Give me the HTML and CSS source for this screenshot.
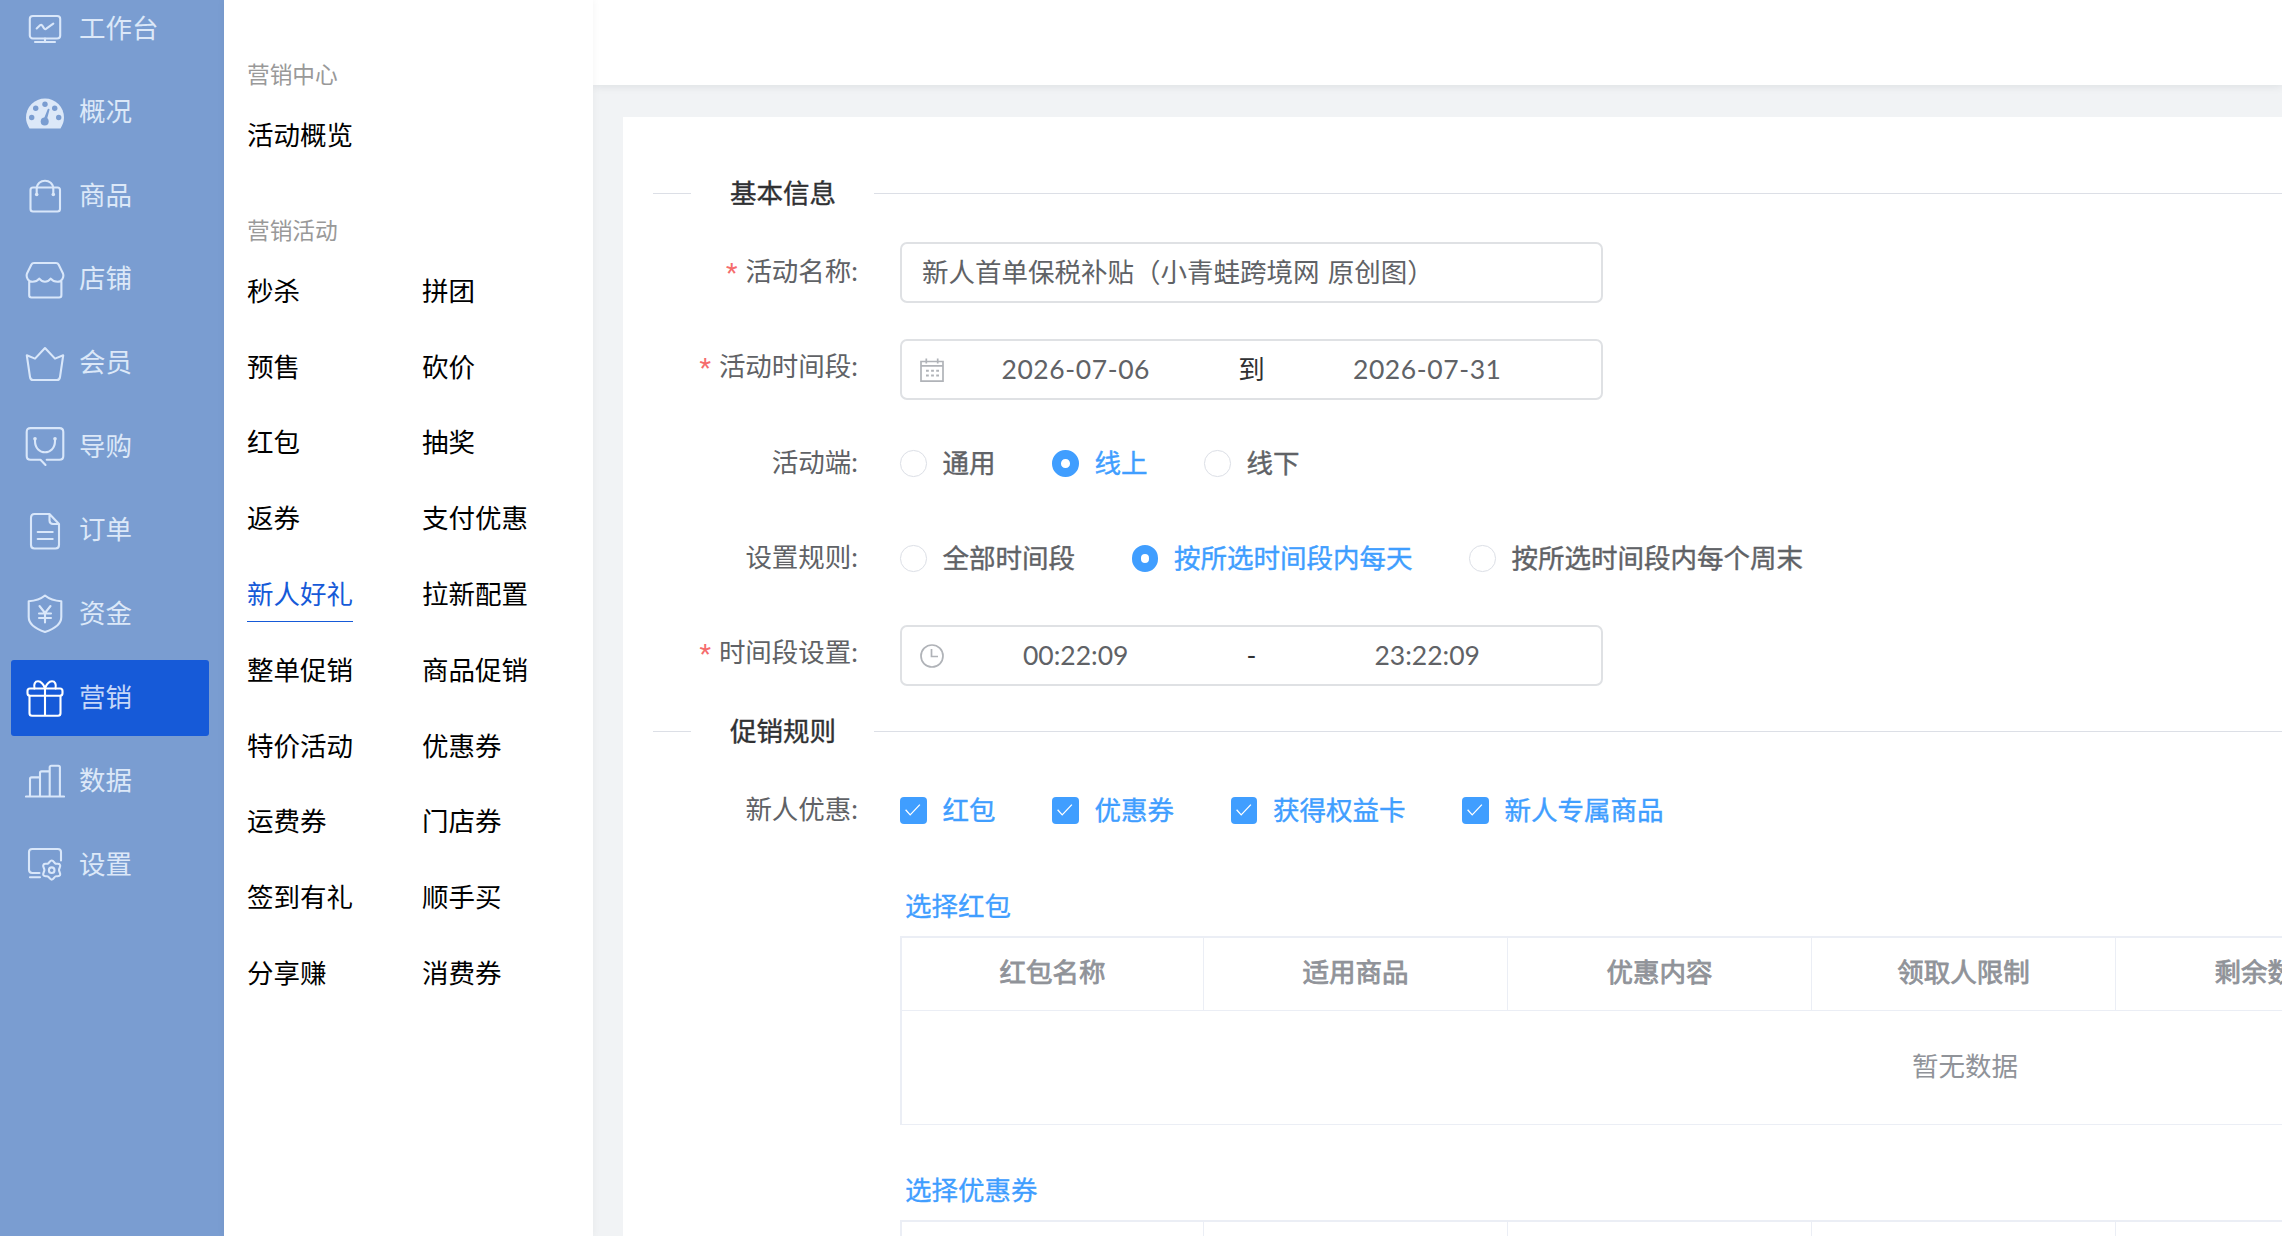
FILE: index.html
```html
<!DOCTYPE html>
<html lang="zh-CN">
<head>
  <meta charset="UTF-8">
  <meta name="viewport" content="width=device-width, initial-scale=1.0">
  <title>新人好礼</title>
  <link rel="stylesheet" href="styles.css">
</head>
<body>
  <div class="app">
    <nav class="sidebar">
      <a class="nav-item">
        <svg class="nav-icon" viewBox="0 0 40 40"><rect x="4.8" y="7" width="30.4" height="22.5" rx="3"/><path d="M20 29.5V33M10 33h20M11.7 19.5l3.6-3.4c.8-.6 1.2-.4 1.8.3l2 3c.7 1 1.4 1 2.2.3l7-5"/></svg>
        <span>工作台</span>
      </a>
      <a class="nav-item">
        <svg class="nav-icon" viewBox="0 0 40 40">
          <path class="fill" d="M4.5 35.5C2.4 32 1 28.5 1 24.500a19 19 0 0 1 38 0c0 4-1.400 7.500-3.500 11z"/>
          <g class="hole"><circle cx="6.700" cy="24.500" r="2.700"/><circle cx="10.700" cy="15.200" r="2.700"/><circle cx="20" cy="11.200" r="2.700"/><circle cx="29.700" cy="15.200" r="2.700"/><circle cx="33.700" cy="24.500" r="2.700"/><circle cx="19.700" cy="28.500" r="4"/><path d="M18.400 27l4.300-10.700c.4-1 2-.5 1.800.5L21.500 28z"/></g>
        </svg>
        <span>概况</span>
      </a>
      <a class="nav-item">
        <svg class="nav-icon" viewBox="0 0 40 40"><rect x="5.500" y="11.500" width="29.500" height="24" rx="2.500"/><path d="M11.700 18.500V13c0-11 16.600-11 16.600 0v5.500"/><circle class="fill" cx="11.700" cy="18.500" r="1.800"/><circle class="fill" cx="28.300" cy="18.500" r="1.800"/></svg>
        <span>商品</span>
      </a>
      <a class="nav-item">
        <svg class="nav-icon" viewBox="0 0 40 40"><path d="M9 3h22c1.500 0 2.200.7 2.700 1.700L38 13.500c1.200 3.500-1 8.300-5.500 8.300-3 0-5.300-1.300-6.800-3.200-1.500 1.900-3 3.200-5.700 3.200s-4.200-1.300-5.700-3.200c-1.500 1.900-3.800 3.200-6.800 3.200C3 21.800.8 17 2 13.500L6.300 4.700C6.800 3.700 7.500 3 9 3zM4.200 21.500v13.800c0 1.400.8 2.200 2.200 2.200h27.800c1.400 0 2.200-.8 2.200-2.200V21.500"/></svg>
        <span>店铺</span>
      </a>
      <a class="nav-item">
        <svg class="nav-icon" viewBox="0 0 40 40"><path d="M1.800 11.300l8.200 3.300L20 4l10 10.600 8.200-3.300L35 33c-.3 2-1.200 3-3 3H8c-1.800 0-2.700-1-3-3z"/></svg>
        <span>会员</span>
      </a>
      <a class="nav-item">
        <svg class="nav-icon" viewBox="0 0 40 40"><path d="M20.500 38l-5-5.300H5.500c-2.500 0-3.800-1.300-3.800-3.800v-24c0-2.500 1.300-3.800 3.800-3.800h29c2.500 0 3.800 1.300 3.800 3.800v24c0 2.500-1.300 3.800-3.800 3.800H21.700M10 12v2c0 15 20 15 20 0v-2"/><circle class="fill" cx="10" cy="11.800" r="1.800"/><circle class="fill" cx="30" cy="11.800" r="1.800"/></svg>
        <span>导购</span>
      </a>
      <a class="nav-item">
        <svg class="nav-icon" viewBox="0 0 40 40"><path d="M24.500 3H9.500C7.200 3 6 4.200 6 6.500V34c0 2.300 1.200 3.500 3.500 3.500h21c2.300 0 3.500-1.200 3.500-3.500V13zM24.500 3v6.500c0 2.300 1.200 3.500 3.500 3.500h6M12.700 21h15M12.700 28h15"/></svg>
        <span>订单</span>
      </a>
      <a class="nav-item">
        <svg class="nav-icon" viewBox="0 0 40 40"><path d="M20 1.500c4.500 3.700 9.500 5.300 16.300 5.800V23c0 8-7.300 12-16.300 15-9-3-16.300-7-16.300-15V7.300C10.500 6.800 15.500 5.200 20 1.500zM14.500 12l5.500 7 5.500-7M20 19v9.500M14 19.500h12M14 24h12"/></svg>
        <span>资金</span>
      </a>
      <a class="nav-item active">
        <svg class="nav-icon" viewBox="0 0 40 40"><rect x="2.500" y="10.500" width="35" height="7.300" rx="2.500"/><path d="M4.500 17.800v17.400c0 1.500 1 2.500 2.500 2.500h26c1.500 0 2.500-1 2.500-2.500V17.800M20 10.500v27.200M9.500 10.500C8.500 6 10 3.300 13 3.300s6 3.200 7 7.200c1-4 4-7.200 7-7.200s4.500 2.700 3.500 7.200"/></svg>
        <span>营销</span>
      </a>
      <a class="nav-item">
        <svg class="nav-icon" viewBox="0 0 40 40"><path d="M1 34.500h38M5 34.500V17c0-1 .6-1.600 1.600-1.600H15M15 34.500V11c0-1 .6-1.600 1.600-1.600h8.100M24.700 34.500V5.300c0-1 .6-1.600 1.600-1.600h7c1 0 1.600.6 1.600 1.600v29.200"/></svg>
        <span>数据</span>
      </a>
      <a class="nav-item">
        <svg class="nav-icon" viewBox="0 0 40 40"><path d="M14.500 28H7.200C5 28 4 27 4 24.800V7c0-2 1-3 3.200-3h25.600C35 4 36 5 36 7v8.500M5 32.200h10"/><path d="M26.700 15.500c2 0 2.300 2.600 3.900 3.200 1.500.5 3.400-.7 4.400 1 1 1.600-1 3.400-1 5.300s2 3.600 1 5.300c-1 1.700-2.900.5-4.400 1.100-1.600.6-1.900 3.200-3.900 3.200s-2.300-2.600-3.900-3.200c-1.500-.6-3.400.6-4.400-1.100s1-3.400 1-5.300-2-3.700-1-5.300c1-1.700 2.900-.5 4.400-1 1.600-.6 1.900-3.200 3.900-3.200z"/><circle cx="26.700" cy="25.200" r="2.800"/></svg>
        <span>设置</span>
      </a>
    </nav>

    <aside class="submenu">
      <div class="submenu-title">营销中心</div>
      <div class="submenu-list">
        <a>活动概览</a>
      </div>
      <div class="submenu-title">营销活动</div>
      <div class="submenu-list">
        <a>秒杀</a><a>拼团</a>
        <a>预售</a><a>砍价</a>
        <a>红包</a><a>抽奖</a>
        <a>返券</a><a>支付优惠</a>
        <a class="current">新人好礼</a><a>拉新配置</a>
        <a>整单促销</a><a>商品促销</a>
        <a>特价活动</a><a>优惠券</a>
        <a>运费券</a><a>门店券</a>
        <a>签到有礼</a><a>顺手买</a>
        <a>分享赚</a><a>消费券</a>
      </div>
    </aside>

    <main class="main">
      <header class="topbar"></header>
      <section class="card">
        <div class="divider"><span>基本信息</span></div>

        <div class="form-item">
          <label class="required">活动名称:</label>
          <div class="input">新人首单保税补贴（小青蛙跨境网 原创图）</div>
        </div>
        <div class="form-item item-range">
          <label class="required">活动时间段:</label>
          <div class="input range">
            <svg class="range-icon" viewBox="0 0 24 24"><path d="M1 3.500h22v19.700H1zM1 7.800h22M6.300.5v5M17.700.5v5"/><path class="dots" d="M6 12.800h13M6 17.500h13"/></svg>
            <span class="range-value">2026-07-06</span>
            <span class="range-sep">到</span>
            <span class="range-value">2026-07-31</span>
          </div>
        </div>
        <div class="form-item item-side">
          <label>活动端:</label>
          <div class="options">
            <span class="option"><i class="radio"></i>通用</span>
            <span class="option checked"><i class="radio"></i>线上</span>
            <span class="option"><i class="radio"></i>线下</span>
          </div>
        </div>
        <div class="form-item">
          <label>设置规则:</label>
          <div class="options">
            <span class="option"><i class="radio"></i>全部时间段</span>
            <span class="option checked"><i class="radio"></i>按所选时间段内每天</span>
            <span class="option"><i class="radio"></i>按所选时间段内每个周末</span>
          </div>
        </div>
        <div class="form-item item-range">
          <label class="required">时间段设置:</label>
          <div class="input range">
            <svg class="range-icon" viewBox="0 0 24 24"><circle cx="12" cy="12" r="11"/><path d="M11.500 5v7.500h6.500"/></svg>
            <span class="range-value time">00:22:09</span>
            <span class="range-sep">-</span>
            <span class="range-value time">23:22:09</span>
          </div>
        </div>

        <div class="divider divider-rules"><span>促销规则</span></div>

        <div class="form-item">
          <label>新人优惠:</label>
          <div class="options">
            <span class="option checked"><svg class="checkbox" viewBox="0 0 26 26"><path d="M5.500 12.500l4.500 5 9.500-10"/></svg>红包</span>
            <span class="option checked"><svg class="checkbox" viewBox="0 0 26 26"><path d="M5.500 12.500l4.500 5 9.500-10"/></svg>优惠券</span>
            <span class="option checked"><svg class="checkbox" viewBox="0 0 26 26"><path d="M5.500 12.500l4.500 5 9.500-10"/></svg>获得权益卡</span>
            <span class="option checked"><svg class="checkbox" viewBox="0 0 26 26"><path d="M5.500 12.500l4.500 5 9.500-10"/></svg>新人专属商品</span>
          </div>
        </div>

        <div class="picker">
          <a class="picker-link">选择红包</a>
          <div class="table">
            <div class="table-head">
              <div>红包名称</div><div>适用商品</div><div>优惠内容</div><div>领取人限制</div><div>剩余数量</div><div></div><div></div>
            </div>
            <div class="table-empty">暂无数据</div>
          </div>
        </div>
        <div class="picker">
          <a class="picker-link">选择优惠券</a>
          <div class="table">
            <div class="table-head">
              <div></div><div></div><div></div><div></div><div></div><div></div><div></div>
            </div>
          </div>
        </div>
      </section>
    </main>
  </div>
</body>
</html>
```

FILE: styles.css
```css
* {
  box-sizing: border-box;
}
body {
  margin: 0;
  font-family: Lato, "Noto Sans CJK SC", sans-serif;
  font-size: 26.5px;
  color: #606266;
  background-color: #f1f3f5;
  overflow: hidden;
}
.app {
  display: flex;
  height: 100vh;
  overflow: hidden;
}

/* left navigation */
.sidebar {
  flex: none;
  width: 224px;
  padding: 0 15px 0 11px;
  margin-top: -9px;
  background-color: #7a9dd1;
}
.nav-item {
  display: flex;
  align-items: center;
  height: 76px;
  margin-bottom: 7.65px;
  padding-left: 14px;
  border-radius: 3px;
  color: #dce8f8;
}
.nav-item span {
  margin: -6px 0 0 14px;
}
.nav-icon {
  width: 40px;
  height: 40px;
  fill: none;
  stroke: #d9e7fa;
  stroke-width: 2.1;
  stroke-linejoin: round;
  stroke-linecap: round;
}
.nav-icon .fill {
  fill: #dce8f8;
  stroke: none;
}
.nav-icon .hole {
  fill: #7a9dd1;
  stroke: none;
}
.nav-item.active {
  background-color: #165ad8;
  color: #c5d7f8;
}
.nav-item.active .nav-icon {
  stroke: #fff;
}

/* second level menu */
.submenu {
  flex: none;
  width: 369px;
  padding: 56px 0 0 23px;
  background-color: #fff;
  box-shadow: 0 0 8px rgba(0, 0, 0, 0.05);
  z-index: 1;
}
.submenu-title {
  height: 38px;
  line-height: 38px;
  font-size: 22.7px;
  color: #999;
}
.submenu-list {
  display: grid;
  grid-template-columns: 175px 1fr;
  grid-auto-rows: 75.8px;
  justify-items: start;
  margin: 15px 0 27px;
}
.submenu-list a {
  height: 54px;
  line-height: 53px;
  color: #000;
}
.submenu-list .current {
  color: #165ad8;
  border-bottom: 1.5px solid #165ad8;
}

/* content */
.main {
  flex: 1;
  min-width: 0;
}
.topbar {
  height: 85px;
  background-color: #fff;
  box-shadow: 0 2px 8px rgba(0, 21, 41, 0.08);
}
.card {
  height: calc(100vh - 117px);
  margin: 32px 0 0 30px;
  padding: 56px 0 0 30px;
  background-color: #fff;
  overflow: hidden;
}
.divider {
  display: flex;
  align-items: center;
  height: 40px;
  color: #303133;
  -webkit-text-stroke: 0.4px;
}
.divider::before,
.divider::after {
  content: "";
  width: 38px;
  height: 1px;
  background-color: #dcdfe6;
}
.divider::after {
  flex: 1;
}
.divider span {
  padding: 0 38px 0 39px;
  line-height: 40px;
}
.divider + .form-item {
  margin-top: 29px;
}
.divider-rules {
  margin-top: -7px;
}
.form-item {
  display: flex;
  height: 61px;
  margin-bottom: 34px;
}
.form-item label {
  flex: none;
  width: 247px;
  padding-right: 42px;
  line-height: 59px;
  text-align: right;
}
.required::before {
  content: "*";
  margin-right: 8px;
  font-family: Roboto, sans-serif;
  color: #f56c6c;
}
.input {
  width: 703px;
  height: 61px;
  padding: 0 20px;
  line-height: 57px;
  border: 2px solid #dfe1e4;
  border-radius: 7px;
  word-spacing: 1.5px;
}
.item-range .input {
  margin-top: 2px;
}
.item-side {
  margin-top: 35px;
}
.range {
  display: flex;
  align-items: center;
  padding: 0 18px;
}
.range-icon {
  width: 24px;
  height: 24px;
  margin-right: -24px;
  fill: none;
  stroke: #b0b3b8;
  stroke-width: 1.7;
}
.range-icon .dots {
  stroke-width: 1.9;
  stroke-dasharray: 2.8 2.3;
}
.range-value {
  flex: 1;
  text-align: center;
  letter-spacing: 0.6px;
}
.range-value.time {
  letter-spacing: 0;
}
.range-sep {
  width: 40px;
  text-align: center;
  color: #303133;
}
.options {
  display: flex;
  align-items: center;
  gap: 56.5px;
  -webkit-text-stroke: 0.4px;
}
.option {
  display: flex;
  align-items: center;
  height: 61px;
  line-height: 59px;
}
.option.checked {
  color: #409eff;
}
.radio {
  width: 26.5px;
  height: 26.5px;
  margin-right: 16px;
  border: 1px solid #dcdfe6;
  border-radius: 50%;
}
.checked .radio {
  border: 9.5px solid #409eff;
}
.checkbox {
  width: 26.5px;
  height: 26.5px;
  margin-right: 16px;
  border-radius: 4px;
  background-color: #409eff;
  fill: none;
  stroke: #fff;
  stroke-width: 1.3;
}

/* coupon tables */
.picker {
  width: 2130px;
  margin: 46px 0 0 247px;
}
.picker-link {
  display: block;
  height: 49px;
  padding-left: 5px;
  line-height: 38px;
  color: #409eff;
  -webkit-text-stroke: 0.3px;
}
.table {
  border: 2px solid #ebeef5;
  border-bottom-width: 1px;
  color: #909399;
}
.table-head {
  display: grid;
  grid-template-columns: 302px repeat(6, 304px);
  height: 73px;
  line-height: 69px;
  text-align: center;
  -webkit-text-stroke: 0.8px;
}
.table-head div {
  border-right: 1px solid #ebeef5;
  border-bottom: 1px solid #ebeef5;
}
.table-empty {
  height: 113px;
  line-height: 110px;
  text-align: center;
}
```
